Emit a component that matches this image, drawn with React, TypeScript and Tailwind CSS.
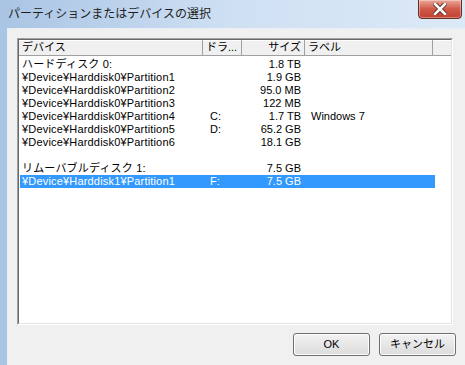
import React from 'react'

const font = { fontFamily: '"Liberation Sans", "Noto Sans CJK JP", sans-serif' }

type Row = { name: string; drive?: string; size?: string; label?: string; selected?: boolean }

const rows: Row[] = [
    { name: 'ハードディスク 0:', size: '1.8 TB' },
    { name: '¥Device¥Harddisk0¥Partition1', size: '1.9 GB' },
    { name: '¥Device¥Harddisk0¥Partition2', size: '95.0 MB' },
    { name: '¥Device¥Harddisk0¥Partition3', size: '122 MB' },
    { name: '¥Device¥Harddisk0¥Partition4', drive: 'C:', size: '1.7 TB', label: 'Windows 7' },
    { name: '¥Device¥Harddisk0¥Partition5', drive: 'D:', size: '65.2 GB' },
    { name: '¥Device¥Harddisk0¥Partition6', size: '18.1 GB' },
    { name: '' },
    { name: 'リムーバブルディスク 1:', size: '7.5 GB' },
    { name: '¥Device¥Harddisk1¥Partition1', drive: 'F:', size: '7.5 GB', selected: true },
]

function HeaderCell({ w, children, right }: { w: string; children?: React.ReactNode; right?: boolean }) {
    return (
        <div className={`${w} h-full flex items-center border-r border-[#a0a0a0] px-[3px] ${right ? 'justify-end' : ''}`}>
            {children}
        </div>
    )
}

export default function App() {
    return (
        <div
            className="w-[465px] h-[365px] relative overflow-hidden bg-gradient-to-r from-[#a9c4e4] via-[#cfe0f3] to-[#dce9f7] text-[11px] text-black"
            style={font}
        >
            {/* title bar */}
            <div className="h-[28px] flex items-center pl-[8px] text-[12px] text-[#1e1e1e]">
                パーティションまたはデバイスの選択
            </div>

            {/* close button */}
            <div className="absolute left-[418px] top-[-1px] w-[44px] h-[20px] rounded-b-[4px] border border-[#6b2a22] bg-gradient-to-b from-[#e9a899] via-[#cf5a48] to-[#c2402f] flex items-center justify-center shadow-[inset_0_0_0_1px_rgba(255,255,255,0.35)]">
                <svg width="14" height="12" viewBox="0 0 14 12">
                    <path d="M2 1 L12 11 M12 1 L2 11" stroke="#5a2a24" strokeWidth="4.4" strokeLinecap="square" />
                    <path d="M2 1 L12 11 M12 1 L2 11" stroke="#ffffff" strokeWidth="2.6" strokeLinecap="square" />
                </svg>
            </div>

            {/* client area */}
            <div className="ml-[7px] h-[337px] bg-[#f0f0f0] border-l border-t border-[#e8eef6] flex flex-col">
                <div className="mt-[9px] ml-[9px] w-[436px] h-[287px] border-t border-l border-[#a0a0a0] border-b border-r border-b-white border-r-white">
                    <div className="h-full border-t border-l border-[#696969] border-b border-r border-b-[#e3e3e3] border-r-[#e3e3e3] bg-white flex flex-col">
                        {/* header */}
                        <div className="h-[16px] flex shrink-0 bg-[#f0f0f0] border-b border-[#a0a0a0] shadow-[inset_0_1px_0_#ffffff]">
                            <HeaderCell w="w-[184px]">デバイス</HeaderCell>
                            <HeaderCell w="w-[39px]">ドラ...</HeaderCell>
                            <HeaderCell w="w-[63px]" right>サイズ</HeaderCell>
                            <HeaderCell w="w-[128px]">ラベル</HeaderCell>
                            <div className="flex-1" />
                        </div>

                        {/* rows */}
                        <div className="pt-[2px] flex flex-col">
                            {rows.map((r, i) => (
                                <div
                                    key={i}
                                    className={`h-[13px] w-[415px] ml-[1px] flex items-center leading-none ${r.selected ? 'bg-[#3399ff] text-white' : ''}`}
                                >
                                    <div className="w-[183px] pl-[2px] whitespace-nowrap tracking-[0.18px]">{r.name}</div>
                                    <div className="w-[39px] pl-[7px]">{r.drive}</div>
                                    <div className="w-[59px] text-right">{r.size}</div>
                                    <div className="flex-1 pl-[10px]">{r.label}</div>
                                </div>
                            ))}
                        </div>
                    </div>
                </div>

                {/* buttons */}
                <div className="mt-[8px] flex justify-end gap-[9px] pr-[3px] w-[451px]">
                    <button className="w-[77px] h-[23px] rounded-[3px] border border-[#707070] bg-gradient-to-b from-[#f2f2f2] to-[#dcdcdc] shadow-[inset_0_0_0_1px_#fcfcfc] text-[11px]">
                        OK
                    </button>
                    <button className="w-[77px] h-[23px] rounded-[3px] border border-[#707070] bg-gradient-to-b from-[#f2f2f2] to-[#dcdcdc] shadow-[inset_0_0_0_1px_#fcfcfc] text-[11px]">
                        キャンセル
                    </button>
                </div>
            </div>
        </div>
    )
}
